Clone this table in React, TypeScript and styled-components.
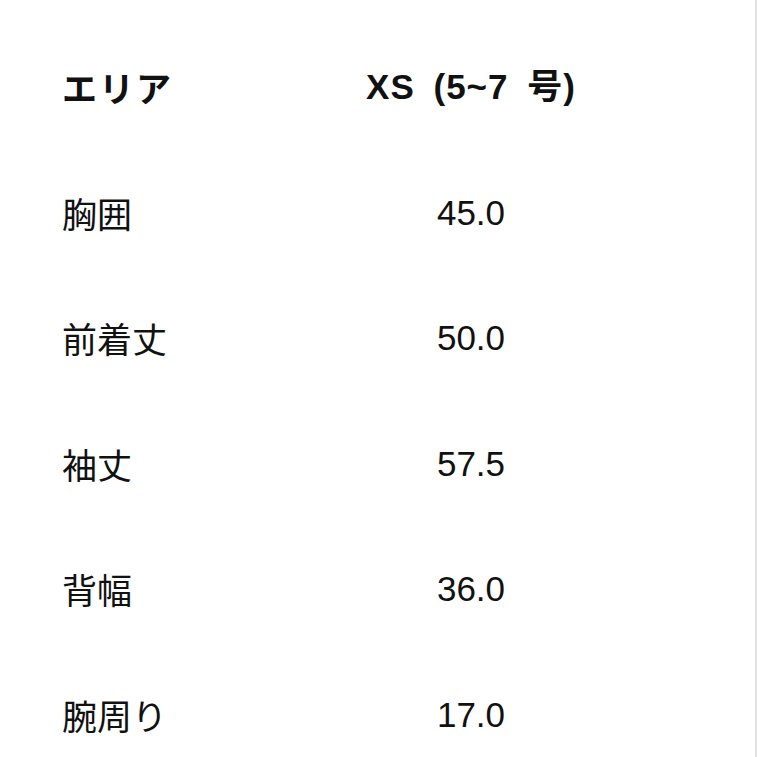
import { createGlobalStyle, styled } from "styled-components";

const GlobalStyle = createGlobalStyle`
  html, body {
    margin: 0;
    padding: 0;
    background: #ffffff;
  }
  body {
    font-family: "Liberation Sans", Arial, "Noto Sans CJK JP", sans-serif;
    color: #111111;
  }
`;

const Page = styled.div`
  width: 757px;
  height: 757px;
  box-sizing: border-box;
  border-right: 2px solid #e2e2e2;
  background: #ffffff;
  padding-top: 24px;
  overflow: hidden;
`;

const Row = styled.div`
  display: grid;
  grid-template-columns: 280px 258px;
  height: 125.5px;
  align-items: center;
  padding-left: 62px;
`;

const Label = styled.div<{ $head?: boolean }>`
  font-family: "Noto Sans CJK JP", "Liberation Sans", sans-serif;
  font-size: 35px;
  font-weight: ${(p) => (p.$head ? 700 : 400)};
  letter-spacing: ${(p) => (p.$head ? "2px" : "0")};
  line-height: 1;
`;

const Value = styled.div<{ $head?: boolean }>`
  text-align: center;
  font-family: "Liberation Sans", Arial, "Noto Sans CJK JP", sans-serif;
  font-size: 35px;
  font-weight: ${(p) => (p.$head ? 700 : 400)};
  letter-spacing: ${(p) => (p.$head ? "1px" : "0")};
  word-spacing: ${(p) => (p.$head ? "8px" : "0")};
  line-height: 1;
`;

const rows = [
  { name: "胸囲", size: "45.0" },
  { name: "前着丈", size: "50.0" },
  { name: "袖丈", size: "57.5" },
  { name: "背幅", size: "36.0" },
  { name: "腕周り", size: "17.0" },
];

export default function App() {
  return (
    <>
      <GlobalStyle />
      <Page>
        <Row>
          <Label $head>エリア</Label>
          <Value $head>XS (5~7 号)</Value>
        </Row>
        {rows.map((r) => (
          <Row key={r.name}>
            <Label>{r.name}</Label>
            <Value>{r.size}</Value>
          </Row>
        ))}
      </Page>
    </>
  );
}
